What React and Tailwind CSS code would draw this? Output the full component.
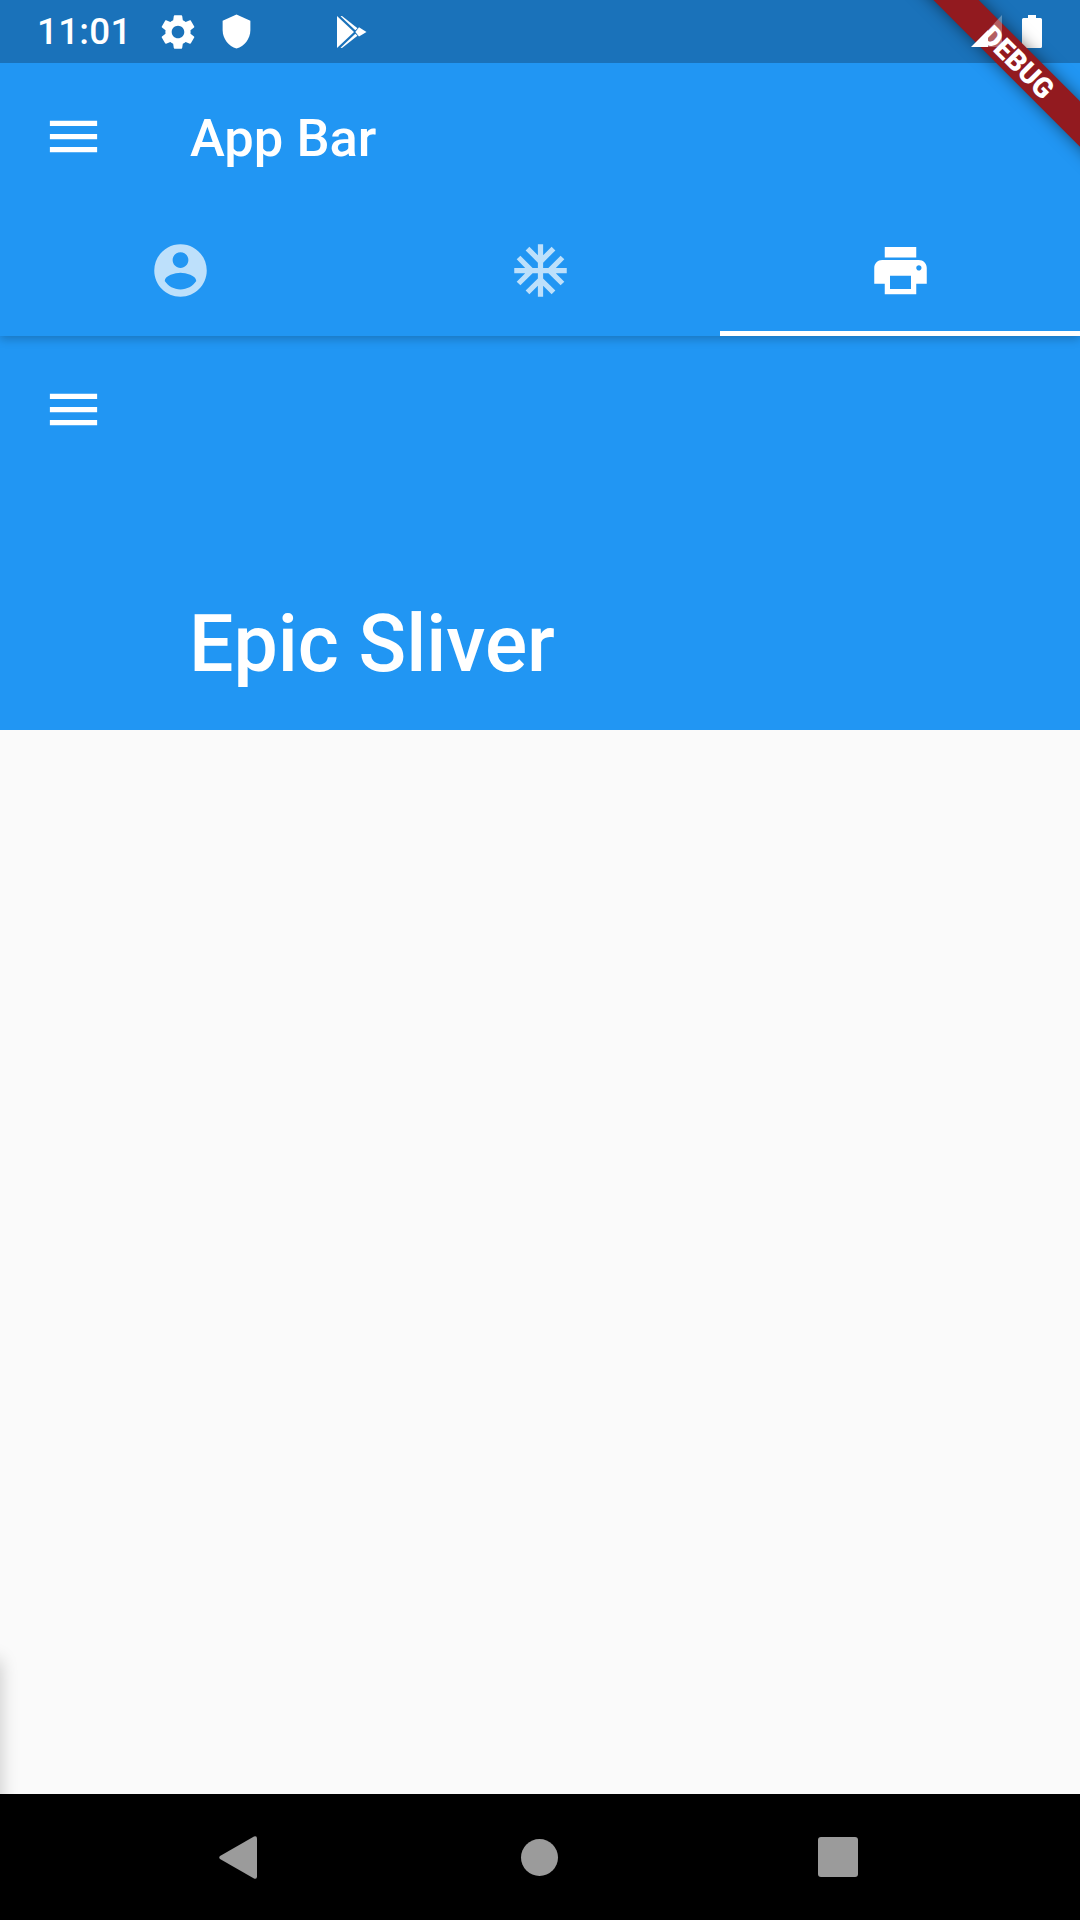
const P = {
  menu: "M3 18h18v-2H3v2zm0-5h18v-2H3v2zm0-7v2h18V6H3z",
  account: "M12 2C6.48 2 2 6.48 2 12s4.48 10 10 10 10-4.48 10-10S17.52 2 12 2zm0 3c1.66 0 3 1.34 3 3s-1.34 3-3 3-3-1.34-3-3 1.34-3 3-3zm0 14.2c-2.5 0-4.71-1.28-6-3.22.03-1.99 4-3.08 6-3.08 1.99 0 5.97 1.09 6 3.08-1.29 1.94-3.5 3.22-6 3.22z",
  snow: "M22 11h-4.170l3.240-3.240-1.410-1.420L15 11h-2V9l4.660-4.660-1.420-1.410L13 6.170V2h-2v4.170L7.760 2.930 6.340 4.340 11 9v2H9L4.340 6.340 2.930 7.760 6.170 11H2v2h4.170l-3.240 3.240 1.410 1.420L9 13h2v2l-4.660 4.660 1.420 1.410L11 17.830V22h2v-4.170l3.240 3.240 1.420-1.410L13 15v-2h2l4.660 4.660 1.410-1.420L17.830 13H22z",
  print: "M19 8H5c-1.660 0-3 1.340-3 3v6h4v4h12v-4h4v-6c0-1.660-1.340-3-3-3zm-3 11H8v-5h8v5zm3-7c-.55 0-1-.45-1-1s.45-1 1-1 1 .45 1 1-.45 1-1 1zm-1-9H6v4h12V3z",
  gear: "M19.14 12.94c.04-.3.06-.61.06-.94 0-.32-.02-.64-.07-.94l2.03-1.58c.18-.14.23-.41.12-.61l-1.92-3.32c-.12-.22-.37-.29-.59-.22l-2.39.96c-.5-.38-1.03-.7-1.62-.94l-.36-2.54c-.04-.24-.24-.41-.48-.41h-3.84c-.24 0-.43.17-.47.41l-.36 2.54c-.59.24-1.13.57-1.62.94l-2.39-.96c-.22-.08-.47 0-.59.22L2.74 8.87c-.12.21-.08.47.12.61l2.03 1.58c-.05.3-.09.63-.09.94s.02.64.07.94l-2.03 1.58c-.18.14-.23.41-.12.61l1.92 3.32c.12.22.37.29.59.22l2.39-.96c.5.38 1.03.7 1.62.94l.36 2.54c.05.24.24.41.48.41h3.84c.24 0 .44-.17.47-.41l.36-2.54c.59-.24 1.13-.56 1.62-.94l2.39.96c.22.08.47 0 .59-.22l1.92-3.32c.12-.22.07-.47-.12-.61l-2.01-1.58zM12 15.6c-1.98 0-3.6-1.62-3.6-3.6s1.62-3.6 3.6-3.6 3.6 1.62 3.6 3.6-1.62 3.6-3.6 3.6z",
  shield: "M12 1L3 5v6c0 5.55 3.84 10.74 9 12 5.16-1.26 9-6.45 9-12V5z",
};

function Icon({ d, className }) {
  return (
    <svg viewBox="0 0 24 24" className={className} fill="currentColor" fillRule="evenodd">
      <path d={d} />
    </svg>
  );
}

function MenuRow() {
  return (
    <div className="flex h-[147px] items-center pl-[42px] shrink-0">
      <Icon d={P.menu} className="w-[63px] h-[63px] text-white" />
    </div>
  );
}

export default function App() {
  return (
    <div className="relative w-[1080px] h-[1920px] overflow-hidden flex flex-col bg-[#fafafa] text-white font-['Roboto',sans-serif]">
      <div className="relative z-20 shrink-0 flex flex-col bg-[#2196f3] shadow-[0_3px_9px_rgba(0,0,0,0.22)]">
        <div className="h-[63px] bg-[#1a72ba] flex items-center">
          <span className="ml-[37px] w-[105px] pt-[1px] text-[36.75px] leading-none font-medium tracking-[0.3px]">11:01</span>
          <Icon d={P.gear} className="ml-[15px] w-[42px] h-[42px]" />
          <Icon d={P.shield} className="ml-[19px] w-[37px] h-[37px]" />
          <svg viewBox="0 0 30 32" className="ml-[82px] w-[30px] h-[32px]" fill="currentColor">
            <path d="M0 0L17 16L0 32z" />
            <path d="M5 0L20.500 12.300L18.300 14.200L3.500 0.300z" />
            <path d="M5 32L20.500 19.700L18.300 17.800L3.500 31.700z" />
            <path d="M22 11.300L29.500 16L22 20.500L18.300 16z" />
          </svg>
          <div className="flex-1" />
          <svg viewBox="0 0 20 33" className="mr-[38px] w-[20px] h-[33px]" fill="currentColor">
            <path d="M6 0h8v3h4.500a1.500 1.500 0 0 1 1.500 1.500V31.500a1.500 1.500 0 0 1-1.500 1.500H1.500A1.500 1.500 0 0 1 0 31.500V4.500A1.500 1.500 0 0 1 1.500 3H6z" />
          </svg>
        </div>
        <div className="h-[147px] flex items-center pl-[42px]">
          <Icon d={P.menu} className="w-[63px] h-[63px]" />
          <span className="ml-[85px] pt-[4px] text-[52.5px] leading-none font-medium">App Bar</span>
        </div>
        <div className="h-[126px] grid grid-cols-3">
          <div className="flex items-center justify-center pb-[6px]">
            <Icon d={P.account} className="w-[63px] h-[63px] text-[#bde0fb]" />
          </div>
          <div className="flex items-center justify-center pb-[6px]">
            <Icon d={P.snow} className="w-[63px] h-[63px] text-[#bde0fb]" />
          </div>
          <div className="flex items-center justify-center pb-[1px] border-b-[5px] border-white">
            <Icon d={P.print} className="w-[63px] h-[63px]" />
          </div>
        </div>
      </div>

      <div className="h-[394px] shrink-0 flex flex-col bg-[#2196f3]">
        <MenuRow />
        <div className="flex-1 flex items-end pl-[189px] pb-[36px]">
          <span className="text-[78.75px] leading-[100px] font-medium">Epic Sliver</span>
        </div>
      </div>

      <div className="flex-1" />

      <div className="relative z-20 h-[126px] shrink-0 bg-black flex items-center text-[#9b9b9b]">
        <svg viewBox="0 0 38 43" className="ml-[219px] w-[38px] h-[43px]" fill="currentColor">
          <path d="M35 0.500Q38 -0.500 38 2.500V40.500Q38 43.500 35 42.500L1 23Q-0.500 21.500 1 20z" />
        </svg>
        <div className="ml-[264px] w-[37px] h-[37px] rounded-full bg-[#9b9b9b]" />
        <div className="ml-[260px] w-[40px] h-[40px] rounded-[3px] bg-[#9b9b9b]" />
      </div>

      <div className="absolute z-10 left-[-16px] top-[1660px] w-[16px] h-[200px] shadow-[0_0_18px_rgba(0,0,0,0.22)] bg-black" />

      <div className="absolute z-30 left-[818px] top-[46px] w-[400px] h-[32px] rotate-45 bg-[#921a1f] shadow-[0_0_16px_rgba(0,0,0,0.5)] flex items-center justify-center">
        <span className="text-[28px] leading-none font-black text-white tracking-[0px] pt-[2px]">DEBUG</span>
      </div>

      <svg viewBox="0 0 32 33" className="absolute z-40 left-[971px] top-[15px] w-[32px] h-[33px] text-white" fill="currentColor">
        <path d="M0 32L17 15V32z" />
        <path d="M17 15L31 0V32H17z" fillOpacity="0.3" />
      </svg>
    </div>
  );
}
